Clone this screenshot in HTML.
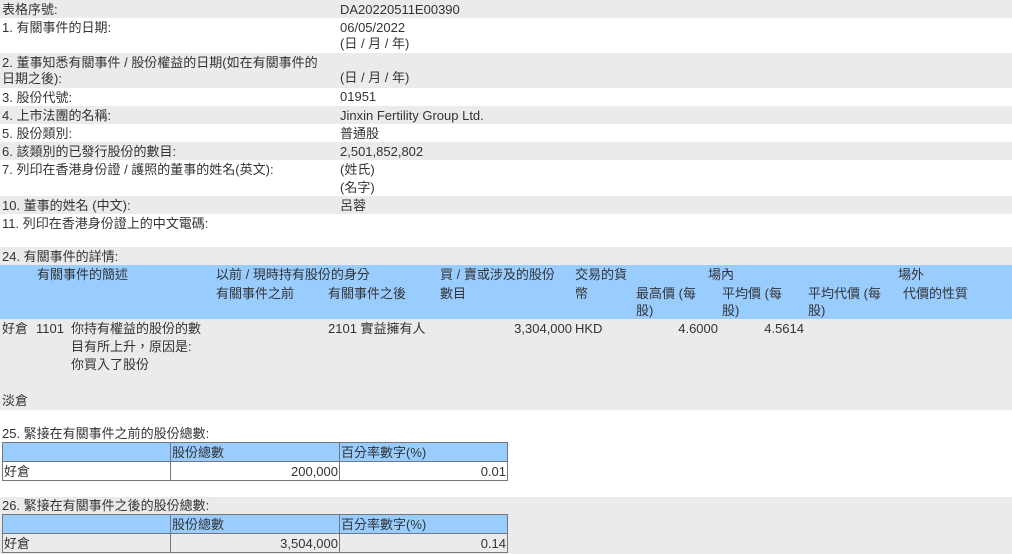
<!DOCTYPE html>
<html><head><meta charset="utf-8"><style>
*{margin:0;padding:0;box-sizing:border-box}
body{width:1012px;height:554px;background:#fff;font-family:"Liberation Sans","Noto Sans CJK TC",sans-serif;font-size:13px;color:#333;position:relative;overflow:hidden;line-height:17px}
.b{position:absolute;left:0;width:1012px}
.g{background:#ebebeb}
.bl{background:#99ccff}
.t{position:absolute;white-space:nowrap}
.r{text-align:right}
table{position:absolute;left:2px;border-collapse:collapse;width:506px}
td{border:1px solid #777;height:19px;padding:0 1px;line-height:17px}
</style></head><body>
<div class="b g" style="top:0;height:18px"></div>
<div class="b g" style="top:53px;height:35px"></div>
<div class="b g" style="top:106px;height:18px"></div>
<div class="b g" style="top:142px;height:18px"></div>
<div class="b g" style="top:196px;height:18px"></div>
<div class="b g" style="top:247px;height:18px"></div>
<div class="b bl" style="top:265px;height:54px"></div>
<div class="b g" style="top:319px;height:91px"></div>
<div class="b g" style="top:497px;height:57px"></div>

<div class="t" style="left:2px;top:1px">表格序號:</div><div class="t" style="left:340px;top:1px">DA20220511E00390</div>
<div class="t" style="left:2px;top:19px">1. 有關事件的日期:</div><div class="t" style="left:340px;top:19px">06/05/2022</div><div class="t" style="left:340px;top:35px">(日 / 月 / 年)</div>
<div class="t" style="left:2px;top:54px">2. 董事知悉有關事件 / 股份權益的日期(如在有關事件的</div><div class="t" style="left:2px;top:70px">日期之後):</div><div class="t" style="left:340px;top:69px">(日 / 月 / 年)</div>
<div class="t" style="left:2px;top:89px">3. 股份代號:</div><div class="t" style="left:340px;top:88px">01951</div>
<div class="t" style="left:2px;top:107px">4. 上市法團的名稱:</div><div class="t" style="left:340px;top:107px">Jinxin Fertility Group Ltd.</div>
<div class="t" style="left:2px;top:125px">5. 股份類別:</div><div class="t" style="left:340px;top:125px">普通股</div>
<div class="t" style="left:2px;top:143px">6. 該類別的已發行股份的數目:</div><div class="t" style="left:340px;top:143px">2,501,852,802</div>
<div class="t" style="left:2px;top:161px">7. 列印在香港身份證 / 護照的董事的姓名(英文):</div><div class="t" style="left:340px;top:161px">(姓氏)</div><div class="t" style="left:340px;top:179px">(名字)</div>
<div class="t" style="left:2px;top:197px">10. 董事的姓名 (中文):</div><div class="t" style="left:340px;top:197px">呂蓉</div>
<div class="t" style="left:2px;top:215px">11. 列印在香港身份證上的中文電碼:</div>

<div class="t" style="left:2px;top:248px">24. 有關事件的詳情:</div>
<div class="t" style="left:37px;top:266px">有關事件的簡述</div>
<div class="t" style="left:216px;top:266px">以前 / 現時持有股份的身分</div>
<div class="t" style="left:216px;top:285px">有關事件之前</div>
<div class="t" style="left:328px;top:285px">有關事件之後</div>
<div class="t" style="left:440px;top:266px">買 / 賣或涉及的股份</div>
<div class="t" style="left:440px;top:285px">數目</div>
<div class="t" style="left:575px;top:266px">交易的貨</div>
<div class="t" style="left:575px;top:285px">幣</div>
<div class="t" style="left:708px;top:266px">場內</div>
<div class="t" style="left:898px;top:266px">場外</div>
<div class="t" style="left:636px;top:285px">最高價 (每</div><div class="t" style="left:636px;top:302px">股)</div>
<div class="t" style="left:722px;top:285px">平均價 (每</div><div class="t" style="left:722px;top:302px">股)</div>
<div class="t" style="left:808px;top:285px">平均代價 (每</div><div class="t" style="left:808px;top:302px">股)</div>
<div class="t" style="left:903px;top:285px">代價的性質</div>

<div class="t" style="left:2px;top:320px">好倉</div>
<div class="t" style="left:36px;top:320px">1101</div>
<div class="t" style="left:71px;top:320px">你持有權益的股份的數</div>
<div class="t" style="left:71px;top:338px">目有所上升，原因是:</div>
<div class="t" style="left:71px;top:356px">你買入了股份</div>
<div class="t" style="left:328px;top:320px">2101 實益擁有人</div>
<div class="t r" style="left:470px;width:102px;top:320px">3,304,000</div>
<div class="t" style="left:575px;top:320px">HKD</div>
<div class="t r" style="left:640px;width:78px;top:320px">4.6000</div>
<div class="t r" style="left:726px;width:78px;top:320px">4.5614</div>
<div class="t" style="left:2px;top:392px">淡倉</div>

<div class="t" style="left:2px;top:425px">25. 緊接在有關事件之前的股份總數:</div>
<table style="top:442px"><tr class="bl"><td style="width:168px"></td><td style="width:169px">股份總數</td><td>百分率數字(%)</td></tr>
<tr><td>好倉</td><td class="r">200,000</td><td class="r">0.01</td></tr></table>
<div class="t" style="left:2px;top:497px">26. 緊接在有關事件之後的股份總數:</div>
<table style="top:514px"><tr class="bl"><td style="width:168px"></td><td style="width:169px">股份總數</td><td>百分率數字(%)</td></tr>
<tr><td>好倉</td><td class="r">3,504,000</td><td class="r">0.14</td></tr></table>
</body></html>
